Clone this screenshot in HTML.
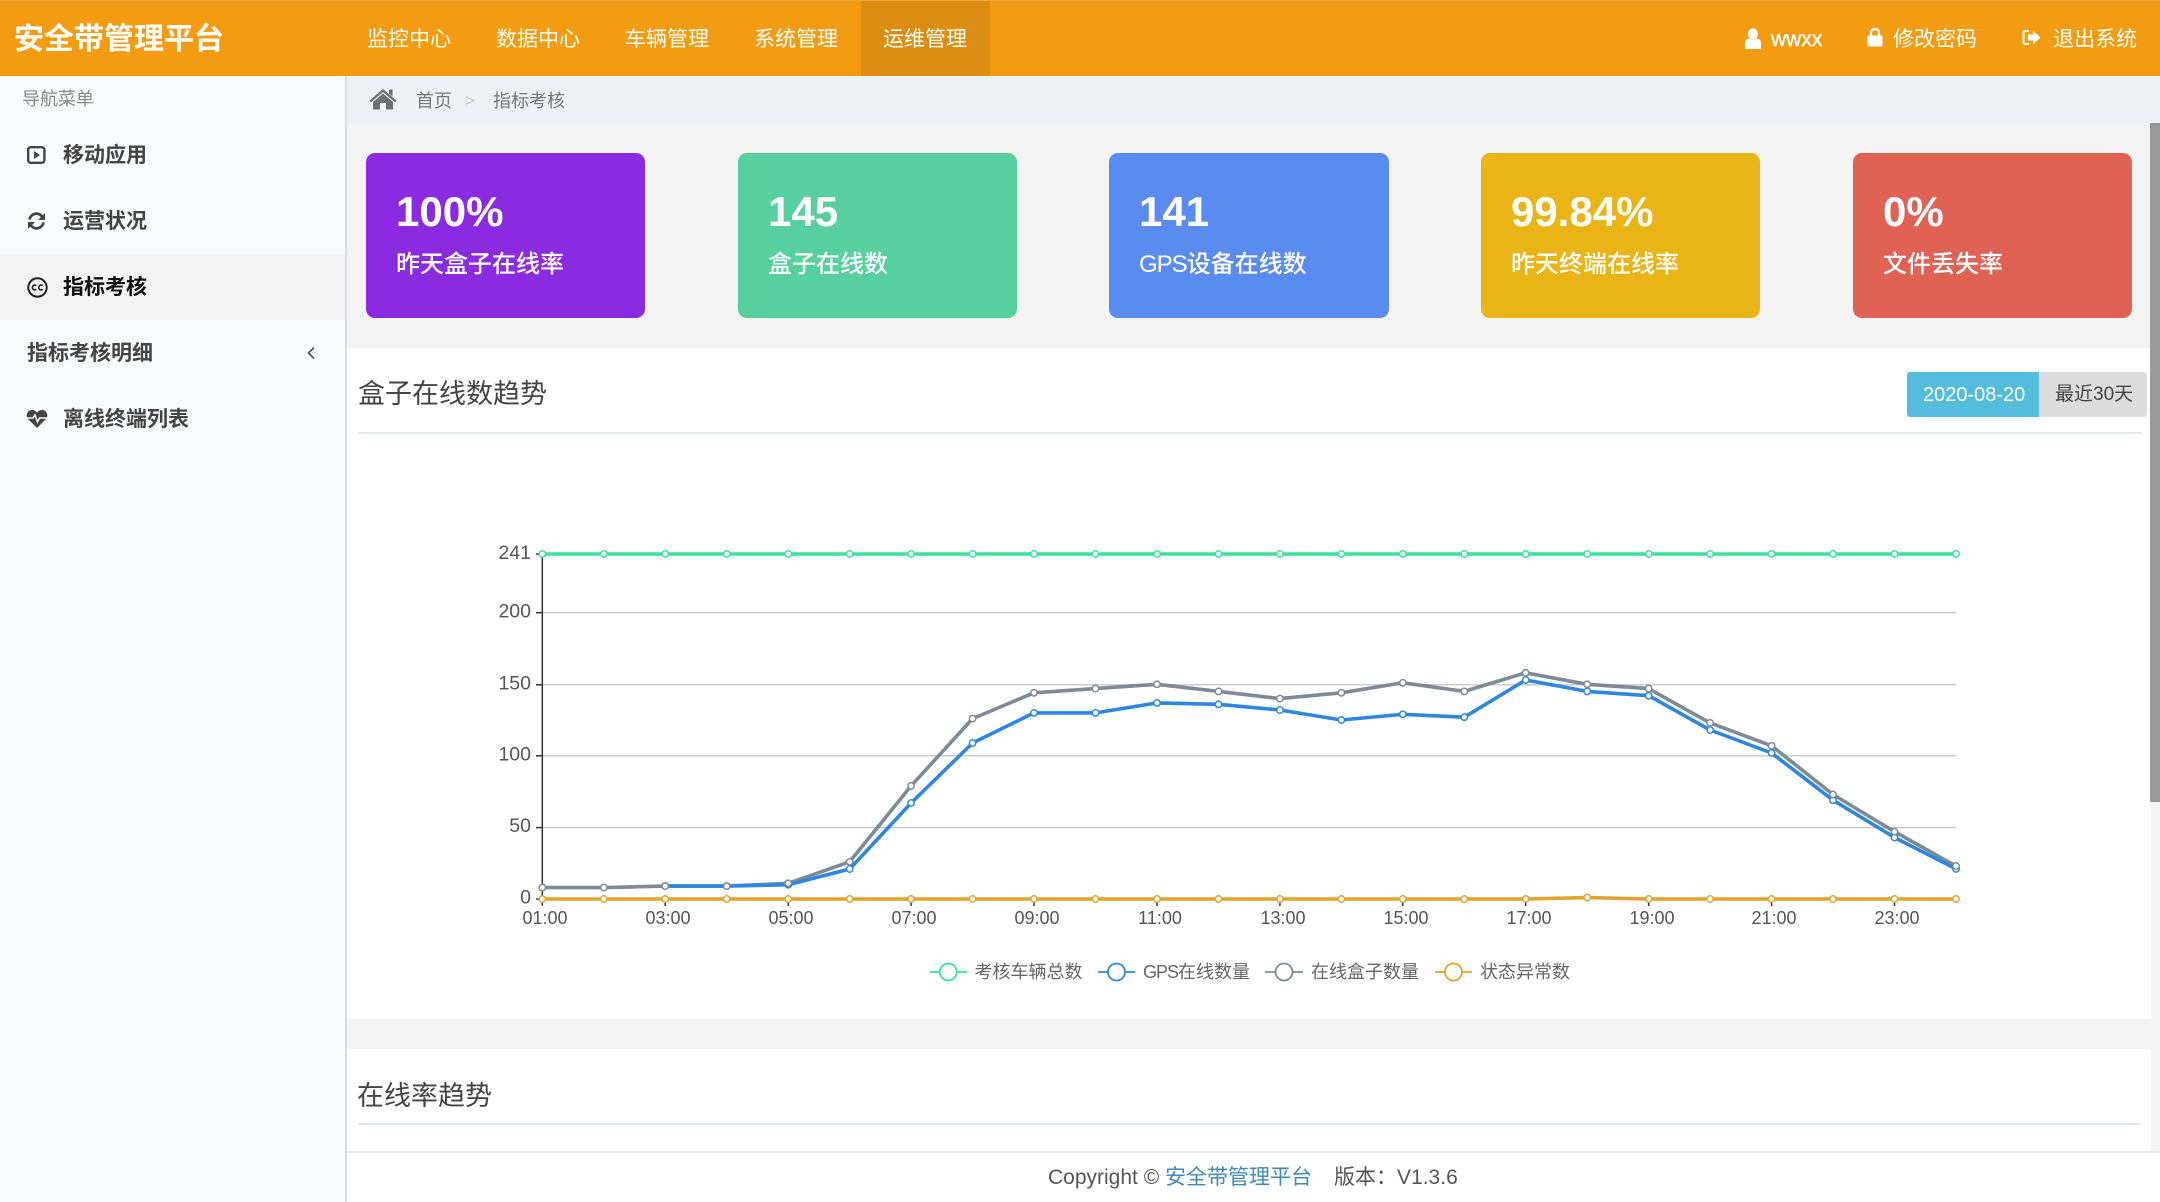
<!DOCTYPE html>
<html lang="zh-CN">
<head>
<meta charset="utf-8">
<title>安全带管理平台</title>
<style>
html,body{margin:0;padding:0;width:2160px;height:1202px;overflow:hidden;background:#fff;}
body{font-family:"Liberation Sans","Noto Sans CJK SC",sans-serif;position:relative;color:#333;}
.a{position:absolute;}
.t{position:absolute;white-space:nowrap;line-height:1;}
.nav{font-size:21px;color:#fff;top:29px;}
.side{font-size:21px;font-weight:700;color:#444;left:63px;}
.card{position:absolute;top:153px;width:279px;height:165px;border-radius:9px;}
.num{position:absolute;left:30px;top:38px;font-size:42px;font-weight:700;color:#fff;line-height:42px;white-space:nowrap;}
.lab{position:absolute;left:30px;top:100px;font-size:24px;font-weight:500;color:#fff;line-height:24px;white-space:nowrap;}
svg text{font-family:"Liberation Sans","Noto Sans CJK SC",sans-serif;}
</style>
</head>
<body>
<!-- header -->
<div class="a" style="left:0;top:0;width:2160px;height:76px;background:#f39c12;"></div>
<div class="a" style="left:0;top:0;width:2160px;height:1px;background:#e8ab50;"></div>
<div class="a" style="left:861px;top:1px;width:129px;height:75px;background:#db8e12;"></div>
<div class="t" style="left:14px;top:25px;font-size:30px;font-weight:700;color:#fff;">安全带管理平台</div>
<div class="t nav" style="left:367px;">监控中心</div>
<div class="t nav" style="left:496px;">数据中心</div>
<div class="t nav" style="left:625px;">车辆管理</div>
<div class="t nav" style="left:754px;">系统管理</div>
<div class="t nav" style="left:883px;">运维管理</div>

<svg class="a" style="left:1744px;top:28px;" width="18" height="21" viewBox="0 0 18 21"><ellipse cx="9" cy="6" rx="5" ry="5.6" fill="#fff"/><path d="M1 20 V15 Q1 11 5 10.5 Q9 13 13 10.5 Q17 11 17 15 V20 Q17 21 16 21 H2 Q1 21 1 20Z" fill="#fff"/></svg>
<div class="t" style="left:1771px;top:29px;font-size:21px;color:#fff;-webkit-text-stroke:.4px #fff;">wwxx</div>
<svg class="a" style="left:1867px;top:27px;" width="16" height="20" viewBox="0 0 16 20"><path d="M1 9 H15 V19 H1Z" fill="#fff" stroke="#fff" stroke-width="1" stroke-linejoin="round"/><path d="M4 9 V6 Q4 2 8 2 Q12 2 12 6 V9" fill="none" stroke="#fff" stroke-width="2.2"/></svg>
<div class="t nav" style="left:1893px;">修改密码</div>
<svg class="a" style="left:2022px;top:29px;" width="19" height="17" viewBox="0 0 19 17"><path d="M7 2 H3.5 Q1.5 2 1.5 4 V13 Q1.5 15 3.5 15 H7" fill="none" stroke="#fff" stroke-width="2"/><path d="M6 5.5 H11 V1.5 L18.5 8.5 L11 15.5 V11.5 H6Z" fill="#fff"/></svg>
<div class="t nav" style="left:2053px;">退出系统</div>

<!-- sidebar -->
<div class="a" style="left:0;top:76px;width:345px;height:1126px;background:#f9fafc;"></div>
<div class="a" style="left:345px;top:76px;width:2px;height:1126px;background:#d9dee4;"></div>
<div class="a" style="left:0;top:254px;width:345px;height:66px;background:#f3f3f4;"></div>
<div class="t" style="left:22px;top:90px;font-size:18px;color:#888;">导航菜单</div>

<svg class="a" style="left:27px;top:146px;" width="19" height="18" viewBox="0 0 19 18"><rect x="1.2" y="1.2" width="16.2" height="15.6" rx="2.5" fill="none" stroke="#444" stroke-width="2.4"/><path d="M7 5 L13 9 L7 13Z" fill="#444"/></svg>
<div class="t side" style="top:145px;">移动应用</div>

<svg class="a" style="left:27px;top:212px;" width="19" height="18" viewBox="0 0 19 18"><path d="M2.5 7.5 A7 7 0 0 1 15 4.5" fill="none" stroke="#444" stroke-width="2.8"/><path d="M18 1 V8 H11Z" fill="#444"/><path d="M16.5 10.5 A7 7 0 0 1 4 13.5" fill="none" stroke="#444" stroke-width="2.8"/><path d="M1 17 V10 H8Z" fill="#444"/></svg>
<div class="t side" style="top:211px;">运营状况</div>

<svg class="a" style="left:27px;top:277px;" width="21" height="21" viewBox="0 0 21 21"><circle cx="10.5" cy="10.5" r="9.2" fill="none" stroke="#222" stroke-width="2"/><path d="M9.2 8.6 A2.4 2.4 0 1 0 9.2 12.4 M15.6 8.6 A2.4 2.4 0 1 0 15.6 12.4" fill="none" stroke="#222" stroke-width="1.6"/></svg>
<div class="t side" style="top:277px;color:#111;">指标考核</div>

<div class="t side" style="left:27px;top:343px;">指标考核明细</div>
<svg class="a" style="left:306px;top:346px;" width="10" height="14" viewBox="0 0 10 14"><path d="M8 1.5 L2.5 7 L8 12.5" fill="none" stroke="#555" stroke-width="1.7"/></svg>

<svg class="a" style="left:26px;top:409px;" width="22" height="20" viewBox="0 0 22 20"><path d="M11 19 L2 10 Q0 7.5 1 4.5 Q2.5 1 6 1 Q9 1 11 3.6 Q13 1 16 1 Q19.5 1 21 4.5 Q22 7.5 20 10Z" fill="#444"/><path d="M0 9 H7 L9 6 L11.5 13 L13.5 9 H22" fill="none" stroke="#f9fafc" stroke-width="1.5"/></svg>
<div class="t side" style="top:409px;">离线终端列表</div>

<!-- breadcrumb -->
<div class="a" style="left:347px;top:76px;width:1813px;height:47px;background:#edf0f4;"></div>
<svg class="a" style="left:369px;top:88px;" width="28" height="22" viewBox="0 0 28 22"><path d="M14 1 L27.5 12.5 L26 14.2 L14 4 L2 14.2 L0.5 12.5Z" fill="#6f6f6f"/><path d="M20 1.5 H23.5 V8.5 L20 5.5Z" fill="#6f6f6f"/><path d="M14 5.5 L24 14 V21.5 H17 V15 H11 V21.5 H4 V14Z" fill="#6f6f6f"/></svg>
<div class="t" style="left:416px;top:92px;font-size:18px;color:#777;">首页</div>
<div class="t" style="left:465px;top:92px;font-size:17px;color:#ccc;">&gt;</div>
<div class="t" style="left:493px;top:92px;font-size:18px;color:#777;">指标考核</div>

<!-- content bg -->
<div class="a" style="left:347px;top:123px;width:1813px;height:1028px;background:#f3f3f4;"></div>

<!-- cards -->
<div class="card" style="left:366px;background:#8a2be2;"><div class="num">100%</div><div class="lab">昨天盒子在线率</div></div>
<div class="card" style="left:738px;background:#57cf9f;"><div class="num">145</div><div class="lab">盒子在线数</div></div>
<div class="card" style="left:1109px;width:280px;background:#5a8bf0;"><div class="num">141</div><div class="lab"><span style="letter-spacing:-1px;">GPS</span>设备在线数</div></div>
<div class="card" style="left:1481px;background:#e9b416;"><div class="num">99.84%</div><div class="lab">昨天终端在线率</div></div>
<div class="card" style="left:1853px;background:#e06254;"><div class="num">0%</div><div class="lab">文件丢失率</div></div>

<!-- section 1 -->
<div class="a" style="left:347px;top:348px;width:1804px;height:671px;background:#fff;"></div>
<div class="t" style="left:358px;top:381px;font-size:27px;color:#444;">盒子在线数趋势</div>
<div class="a" style="left:1907px;top:372px;width:132px;height:45px;background:#54bddb;border-radius:3px 0 0 3px;"></div>
<div class="a" style="left:2039px;top:372px;width:108px;height:45px;background:#dcdcdc;border-radius:0 3px 3px 0;"></div>
<div class="t" style="left:1923px;top:385px;font-size:20px;color:#fff;">2020-08-20</div>
<div class="t" style="left:2055px;top:385px;font-size:19px;color:#444;">最近30天</div>
<div class="a" style="left:358px;top:432px;width:1783px;height:1.5px;background:#e7eaec;"></div>

<svg class="a" style="left:347px;top:500px;" width="1804" height="510" viewBox="347 500 1804 510">
<g stroke="#ccc" stroke-width="1.5"><line x1="542.5" y1="612.7" x2="1956" y2="612.7"/><line x1="542.5" y1="684.8" x2="1956" y2="684.8"/><line x1="542.5" y1="755.8" x2="1956" y2="755.8"/><line x1="542.5" y1="827.6" x2="1956" y2="827.6"/></g>
<g stroke="#333" stroke-width="1.5"><line x1="542.3" y1="554" x2="542.3" y2="899"/><line x1="536" y1="554" x2="542.3" y2="554"/><line x1="536" y1="612.7" x2="542.3" y2="612.7"/><line x1="536" y1="684.8" x2="542.3" y2="684.8"/><line x1="536" y1="755.8" x2="542.3" y2="755.8"/><line x1="536" y1="827.6" x2="542.3" y2="827.6"/><line x1="536" y1="899" x2="542.3" y2="899"/>
<line x1="542.3" y1="899" x2="542.3" y2="906"/><line x1="665.2" y1="899" x2="665.2" y2="906"/><line x1="788.2" y1="899" x2="788.2" y2="906"/><line x1="911.1" y1="899" x2="911.1" y2="906"/><line x1="1034" y1="899" x2="1034" y2="906"/><line x1="1157" y1="899" x2="1157" y2="906"/><line x1="1279.9" y1="899" x2="1279.9" y2="906"/><line x1="1402.8" y1="899" x2="1402.8" y2="906"/><line x1="1525.7" y1="899" x2="1525.7" y2="906"/><line x1="1648.7" y1="899" x2="1648.7" y2="906"/><line x1="1771.6" y1="899" x2="1771.6" y2="906"/><line x1="1894.5" y1="899" x2="1894.5" y2="906"/></g>
<g font-size="19.5" fill="#555" text-anchor="end"><text x="531" y="559">241</text><text x="531" y="617.5">200</text><text x="531" y="689.5">150</text><text x="531" y="760.5">100</text><text x="531" y="832">50</text><text x="531" y="903.5">0</text></g>
<g font-size="18" fill="#555" text-anchor="middle"><text x="545" y="924">01:00</text><text x="668" y="924">03:00</text><text x="791" y="924">05:00</text><text x="914" y="924">07:00</text><text x="1037" y="924">09:00</text><text x="1160" y="924">11:00</text><text x="1283" y="924">13:00</text><text x="1406" y="924">15:00</text><text x="1529" y="924">17:00</text><text x="1652" y="924">19:00</text><text x="1774" y="924">21:00</text><text x="1897" y="924">23:00</text></g>
<g fill="none" stroke-width="3.6" stroke-linejoin="round">
<polyline stroke="#3be29a" points="542.3,554 1956,554"/>
<polyline stroke="#7e8a96" points="542.3,887.6 603.8,887.6 665.2,886.1 726.7,886.1 788.2,883.3 849.7,861.8 911.1,785.9 972.6,718.6 1034,692.8 1095.5,688.6 1157,684.3 1218.5,691.4 1279.9,698.6 1341.4,692.8 1402.8,682.8 1464.3,691.4 1525.7,672.8 1587.2,684.3 1648.7,688.6 1710.1,722.9 1771.6,745.8 1833,794.5 1894.5,831.7 1956,866"/>
<polyline stroke="#2d87e0" points="665.2,886.1 726.7,886.1 788.2,884.7 849.7,869 911.1,803 972.6,743 1034,712.9 1095.5,712.9 1157,702.9 1218.5,704.3 1279.9,710 1341.4,720 1402.8,714.3 1464.3,717.2 1525.7,680 1587.2,691.4 1648.7,695.7 1710.1,730 1771.6,753 1833,800.2 1894.5,837.5 1956,868.9"/>
<polyline stroke="#e3a32d" points="542.3,899 1525.7,899 1587.2,897.6 1648.7,899 1956,899"/>
</g>
<g fill="#fff" stroke-width="1.5">
<g stroke="#3be29a"><circle cx="542.3" cy="554" r="3.2"/><circle cx="603.8" cy="554" r="3.2"/><circle cx="665.2" cy="554" r="3.2"/><circle cx="726.7" cy="554" r="3.2"/><circle cx="788.2" cy="554" r="3.2"/><circle cx="849.7" cy="554" r="3.2"/><circle cx="911.1" cy="554" r="3.2"/><circle cx="972.6" cy="554" r="3.2"/><circle cx="1034" cy="554" r="3.2"/><circle cx="1095.5" cy="554" r="3.2"/><circle cx="1157" cy="554" r="3.2"/><circle cx="1218.5" cy="554" r="3.2"/><circle cx="1279.9" cy="554" r="3.2"/><circle cx="1341.4" cy="554" r="3.2"/><circle cx="1402.8" cy="554" r="3.2"/><circle cx="1464.3" cy="554" r="3.2"/><circle cx="1525.7" cy="554" r="3.2"/><circle cx="1587.2" cy="554" r="3.2"/><circle cx="1648.7" cy="554" r="3.2"/><circle cx="1710.1" cy="554" r="3.2"/><circle cx="1771.6" cy="554" r="3.2"/><circle cx="1833" cy="554" r="3.2"/><circle cx="1894.5" cy="554" r="3.2"/><circle cx="1956" cy="554" r="3.2"/></g>
<g stroke="#2d87e0"><circle cx="665.2" cy="886.1" r="3.2"/><circle cx="726.7" cy="886.1" r="3.2"/><circle cx="788.2" cy="884.7" r="3.2"/><circle cx="849.7" cy="869" r="3.2"/><circle cx="911.1" cy="803" r="3.2"/><circle cx="972.6" cy="743" r="3.2"/><circle cx="1034" cy="712.9" r="3.2"/><circle cx="1095.5" cy="712.9" r="3.2"/><circle cx="1157" cy="702.9" r="3.2"/><circle cx="1218.5" cy="704.3" r="3.2"/><circle cx="1279.9" cy="710" r="3.2"/><circle cx="1341.4" cy="720" r="3.2"/><circle cx="1402.8" cy="714.3" r="3.2"/><circle cx="1464.3" cy="717.2" r="3.2"/><circle cx="1525.7" cy="680" r="3.2"/><circle cx="1587.2" cy="691.4" r="3.2"/><circle cx="1648.7" cy="695.7" r="3.2"/><circle cx="1710.1" cy="730" r="3.2"/><circle cx="1771.6" cy="753" r="3.2"/><circle cx="1833" cy="800.2" r="3.2"/><circle cx="1894.5" cy="837.5" r="3.2"/><circle cx="1956" cy="868.9" r="3.2"/></g>
<g stroke="#7e8a96"><circle cx="542.3" cy="887.6" r="3.2"/><circle cx="603.8" cy="887.6" r="3.2"/><circle cx="665.2" cy="886.1" r="3.2"/><circle cx="726.7" cy="886.1" r="3.2"/><circle cx="788.2" cy="883.3" r="3.2"/><circle cx="849.7" cy="861.8" r="3.2"/><circle cx="911.1" cy="785.9" r="3.2"/><circle cx="972.6" cy="718.6" r="3.2"/><circle cx="1034" cy="692.8" r="3.2"/><circle cx="1095.5" cy="688.6" r="3.2"/><circle cx="1157" cy="684.3" r="3.2"/><circle cx="1218.5" cy="691.4" r="3.2"/><circle cx="1279.9" cy="698.6" r="3.2"/><circle cx="1341.4" cy="692.8" r="3.2"/><circle cx="1402.8" cy="682.8" r="3.2"/><circle cx="1464.3" cy="691.4" r="3.2"/><circle cx="1525.7" cy="672.8" r="3.2"/><circle cx="1587.2" cy="684.3" r="3.2"/><circle cx="1648.7" cy="688.6" r="3.2"/><circle cx="1710.1" cy="722.9" r="3.2"/><circle cx="1771.6" cy="745.8" r="3.2"/><circle cx="1833" cy="794.5" r="3.2"/><circle cx="1894.5" cy="831.7" r="3.2"/><circle cx="1956" cy="866" r="3.2"/></g>
<g stroke="#e3a32d"><circle cx="542.3" cy="899" r="3.2"/><circle cx="603.8" cy="899" r="3.2"/><circle cx="665.2" cy="899" r="3.2"/><circle cx="726.7" cy="899" r="3.2"/><circle cx="788.2" cy="899" r="3.2"/><circle cx="849.7" cy="899" r="3.2"/><circle cx="911.1" cy="899" r="3.2"/><circle cx="972.6" cy="899" r="3.2"/><circle cx="1034" cy="899" r="3.2"/><circle cx="1095.5" cy="899" r="3.2"/><circle cx="1157" cy="899" r="3.2"/><circle cx="1218.5" cy="899" r="3.2"/><circle cx="1279.9" cy="899" r="3.2"/><circle cx="1341.4" cy="899" r="3.2"/><circle cx="1402.8" cy="899" r="3.2"/><circle cx="1464.3" cy="899" r="3.2"/><circle cx="1525.7" cy="899" r="3.2"/><circle cx="1587.2" cy="897.6" r="3.2"/><circle cx="1648.7" cy="899" r="3.2"/><circle cx="1710.1" cy="899" r="3.2"/><circle cx="1771.6" cy="899" r="3.2"/><circle cx="1833" cy="899" r="3.2"/><circle cx="1894.5" cy="899" r="3.2"/><circle cx="1956" cy="899" r="3.2"/></g>
</g>
<g fill="none" stroke-width="1.8">
<g stroke="#3be29a"><line x1="929.6" y1="972" x2="967" y2="972"/><circle cx="948.3" cy="972" r="8.5" fill="#fff"/></g>
<g stroke="#2d87e0"><line x1="1098" y1="972" x2="1135" y2="972"/><circle cx="1116.5" cy="972" r="8.5" fill="#fff"/></g>
<g stroke="#7e8a96"><line x1="1265" y1="972" x2="1303" y2="972"/><circle cx="1284" cy="972" r="8.5" fill="#fff"/></g>
<g stroke="#e3a32d"><line x1="1435" y1="972" x2="1472" y2="972"/><circle cx="1453.5" cy="972" r="8.5" fill="#fff"/></g>
</g>
<g font-size="18" fill="#666"><text x="974.5" y="978">考核车辆总数</text><text x="1143" y="978"><tspan letter-spacing="-1">GPS</tspan>在线数量</text><text x="1311" y="978">在线盒子数量</text><text x="1480" y="978">状态异常数</text></g>
</svg>

<!-- section 2 -->
<div class="a" style="left:347px;top:1049px;width:1804px;height:102px;background:#fff;"></div>
<div class="t" style="left:357px;top:1083px;font-size:27px;color:#444;">在线率趋势</div>
<div class="a" style="left:358px;top:1123px;width:1783px;height:1.5px;background:#e7eaec;"></div>

<!-- scrollbar -->
<div class="a" style="left:2150px;top:123px;width:10px;height:679px;background:#999;"></div>

<!-- footer -->
<div class="a" style="left:347px;top:1151px;width:1813px;height:51px;background:#fff;"></div>
<div class="a" style="left:347px;top:1151px;width:1813px;height:1.5px;background:#e7eaec;"></div>
<div class="t" style="left:1048px;top:1167px;font-size:21px;color:#555;">Copyright © <span style="color:#3f8ab0;">安全带管理平台</span><span style="margin-left:22px;">版本：V1.3.6</span></div>
</body>
</html>
